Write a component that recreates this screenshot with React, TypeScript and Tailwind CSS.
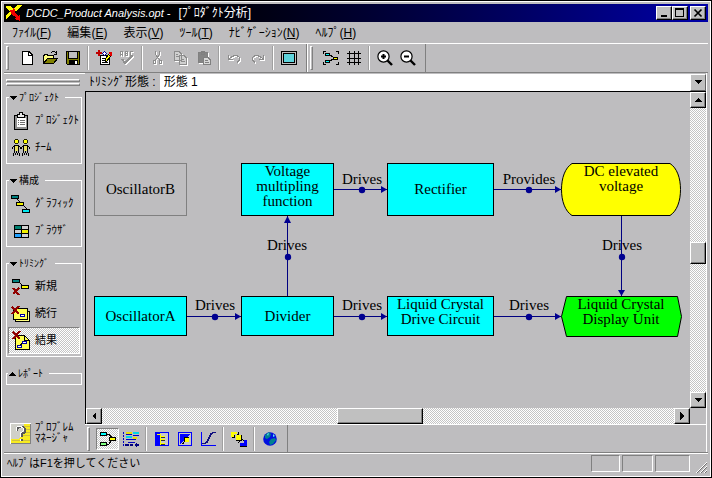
import type { ReactNode } from "react";

const raised =
  "border border-t-white border-l-white border-r-black border-b-black bg-[#c0c0c0] shadow-[inset_-1px_-1px_0_#808080]";
const checker =
  "bg-[repeating-conic-gradient(#ffffff_0_25%,#c4c4c4_0_50%)] bg-[length:2px_2px]";

function Icon({ w = 16, h = 16, smooth = false, children }: { w?: number; h?: number; smooth?: boolean; children: ReactNode }) {
  return (
    <svg
      aria-hidden="true"
      width={w}
      height={h}
      viewBox={`0 0 ${w} ${h}`}
      fill="none"
      stroke="#000"
      shapeRendering={smooth ? "auto" : "crispEdges"}
      className="shrink-0"
    >
      {children}
    </svg>
  );
}

/* ---------- toolbar pieces ---------- */

function Grip() {
  return <span className="mr-1.5 ml-0.5 h-6 w-[3px] shrink-0 border border-t-white border-r-[#808080] border-b-[#808080] border-l-white" />;
}

function Sep() {
  return <span className="mx-[3px] h-6 w-0.5 shrink-0 border-r border-l border-r-white border-l-[#a0a0a0]" />;
}

function Tool({ label, pressed = false, children }: { label: string; pressed?: boolean; children: ReactNode }) {
  return (
    <button
      type="button"
      aria-label={label}
      className={`flex h-[22px] w-[23px] shrink-0 items-center justify-center ${
        pressed ? `border border-t-[#808080] border-r-white border-b-white border-l-[#808080] ${checker}` : ""
      }`}
    >
      {children}
    </button>
  );
}

/* ---------- icons ---------- */

const NewIcon = () => (
  <Icon>
    <path d="M3.5 1.5H10L13.5 5V14.5H3.5Z" fill="#fff" />
    <path d="M9.5 1.5V5.5H13.5" />
  </Icon>
);

const OpenIcon = () => (
  <Icon>
    <path d="M1 13.5V5.5H2.5V4.5H5.5V5.5H11.5V8" fill="#ffff80" />
    <path d="M1.5 13.5L5.5 8.5H15.5L11.5 13.5Z" fill="#808000" />
    <path d="M9 2.5H10M10 1.5H13M13 2.5H14M14.5 1V5M12 4.5H15" />
  </Icon>
);

const SaveIcon = () => (
  <Icon>
    <path d="M1.5 1.5H14.5V14.5H2.5L1.5 13.5Z" fill="#808000" />
    <rect x="4" y="2" width="8" height="6" fill="#c0c0c0" stroke="none" />
    <path d="M3.5 1V8.5H12.5V1" />
    <rect x="4" y="10" width="9" height="5" fill="#000" stroke="none" />
    <rect x="10" y="11" width="2" height="3" fill="#fff" stroke="none" />
  </Icon>
);

const ReportIcon = () => (
  <Icon>
    <path d="M4.5 5.5H13.5V14.5H4.5Z" fill="#fff" />
    <path d="M6 8.5H9M6 10.5H9M6 12.5H12" />
    <path d="M0 3H6M3 0V6" stroke="#c00000" strokeWidth="2" />
    <path d="M6.5 3.5L8.5 1.5L10.5 3.5L8.5 5.5Z" fill="#fff" stroke="#0000a0" />
    <path d="M9 11.5H10.5L14.5 6.5L12.5 4.5L9 9Z" fill="#ffff00" />
    <path d="M13 2H16V6H14Z" fill="#e00000" stroke="none" />
  </Icon>
);

const SpellIcon = () => (
  <Icon>
    <g stroke="#fff" transform="translate(1 1)">
      <path d="M1.5 6V2L2.5 1.5L3.5 2V6M2 4.5H4M6.5 6V1.5H8.5V5.5H6.5M6 3.5H9M14 1.5H11.5V5.5H14" />
      <path d="M3 9L6 13L13 6" strokeWidth="2" />
    </g>
    <g stroke="#909090">
      <path d="M1.5 6V2L2.5 1.5L3.5 2V6M2 4.5H4M6.5 6V1.5H8.5V5.5H6.5M6 3.5H9M14 1.5H11.5V5.5H14" />
      <path d="M3 9L6 13L13 6" strokeWidth="2" />
    </g>
  </Icon>
);

function Embossed({ d, fill }: { d: string; fill?: string }) {
  return (
    <Icon>
      <path d={d} stroke="#fff" transform="translate(1 1)" />
      <path d={d} stroke="#8c8c8c" fill={fill} />
    </Icon>
  );
}

const CUT = "M5.5 1V4.5L9.5 10M9.5 1V4.5L5.5 10M3.5 10.5H5.5V13.5H3.5ZM9.5 10.5H11.5V13.5H9.5Z";
const COPY = "M1.5 1.5H6L8.5 4V10.5H1.5ZM3 4.5H5M3 6.5H7M6.5 5.5H11L13.5 8V14.5H6.5ZM8 9.5H11M8 11.5H12";
const PASTE = "M2.5 2.5H11.5V12.5H2.5ZM5.5 1.5H8.5V4.5H5.5Z";
const UNDO = "M1.5 5V9.5H6M2 9L5 6.5L8 5.5H10L12.5 7.5V10L10 12.5";
const REDO = "M13.5 5V9.5H9M13 9L10 6.5L7 5.5H5L2.5 7.5V10L5 12.5";

const PasteIcon = () => (
  <Icon>
    <path d={PASTE} stroke="#fff" transform="translate(1 1)" />
    <path d={PASTE} stroke="#808080" fill="#858585" />
    <path d="M7.5 7.5H12L14.5 10V14.5H7.5Z" fill="#d8d8d8" stroke="#808080" />
    <path d="M9 10.5H12M9 12.5H13" stroke="#808080" />
  </Icon>
);

const ScreenIcon = () => (
  <Icon>
    <rect x="0.5" y="1.5" width="15" height="13" fill="#c0c0c0" />
    <rect x="2.5" y="3.5" width="11" height="9" fill="#5fd4dc" />
  </Icon>
);

const ArrangeIcon = () => (
  <Icon>
    <path d="M0.5 4V1.5H3M13 1.5H15.5V4M15.5 12V14.5H13M3 14.5H0.5V12" />
    <path d="M6 4L11 8M6 12L11 8" />
    <rect x="2.5" y="3.5" width="4" height="2" fill="#00ffff" />
    <rect x="2.5" y="10.5" width="4" height="2" fill="#00ffff" />
    <rect x="10.5" y="7.5" width="4" height="2" fill="#ffff00" />
  </Icon>
);

const GridIcon = () => (
  <Icon>
    <path d="M3.5 1V15M8.5 1V15M12.5 1V15M1 3.5H15M1 8.5H15M1 12.5H15" />
  </Icon>
);

function ZoomIcon({ plus = false }: { plus?: boolean }) {
  return (
    <Icon smooth>
      <path d="M10 10L15 15" strokeWidth="2.4" />
      <circle cx="6.5" cy="6.5" r="5.6" fill="#fff" strokeWidth="1.2" />
      <path d="M4 6.5H9" strokeWidth="2" />
      {plus && <path d="M6.5 4V9" strokeWidth="2" />}
    </Icon>
  );
}

const ClipboardIcon = () => (
  <Icon w={18} h={18}>
    <rect x="2.5" y="3.5" width="13" height="14" fill="#909090" />
    <rect x="5" y="6" width="9" height="9" fill="#fff" stroke="none" />
    <path d="M5.5 5.5V2.5H7.5V0.5H10.5V2.5H12.5V5.5Z" fill="#e8e8e8" />
    <path d="M6 8.5H7M8 8.5H13M6 10.5H7M8 10.5H13M6 12.5H7M8 12.5H13" stroke="#707070" />
  </Icon>
);

const TeamIcon = () => (
  <Icon w={20} h={18}>
    {[0, 9].map((x) => (
      <g key={x} transform={`translate(${x} 0)`}>
        <path d="M4 0H7V1H8V4H7V5H4V4H3V1H4Z" fill="#202000" stroke="none" />
        <rect x="4" y="1" width="3" height="3" fill="#ffff00" stroke="none" />
        <path d="M3 6.5H8M2.5 7V8M8.5 7V8M1.5 8V10M9.5 8V10" />
        <path d="M3.5 7V11M7.5 7V11M3.5 11V14M7.5 11V14M5.5 12V14M2.5 14V17M4.5 14V16M6.5 14V16M8.5 14V17" />
        <rect x="4" y="7" width="3" height="5" fill="#e8e060" stroke="none" />
      </g>
    ))}
  </Icon>
);

const GraphicIcon = () => (
  <Icon w={20} h={18}>
    <path d="M6 4L16 14" />
    <rect x="0.5" y="0.5" width="7" height="3" fill="#008080" />
    <rect x="5.5" y="7.5" width="7" height="3" fill="#f0f000" />
    <rect x="11.5" y="14.5" width="7" height="3" fill="#00e8f0" />
  </Icon>
);

const BrowserIcon = () => (
  <Icon w={18} h={18}>
    <rect x="2.5" y="3.5" width="14" height="12" fill="#d0d0d0" />
    <rect x="3" y="4" width="6" height="3" fill="#008070" stroke="none" />
    <rect x="10" y="8" width="6" height="3" fill="#f0f000" stroke="none" />
    <rect x="3" y="12" width="6" height="3" fill="#20a0ff" stroke="none" />
    <path d="M9.5 3V16M2 7.5H17M2 11.5H17" />
  </Icon>
);

const TrimNewIcon = () => (
  <Icon w={20} h={18}>
    <path d="M8 4L11 7" />
    <rect x="1.5" y="1.5" width="7" height="3" fill="#008080" />
    <rect x="10.5" y="7.5" width="7" height="3" fill="#ffff00" />
    <path d="M2 10L8 17M8 10L2 16" stroke="#900000" strokeWidth="2" />
  </Icon>
);

const TrimContinueIcon = () => (
  <Icon w={20} h={18}>
    <path d="M4.5 6.5H18.5V16.5H4.5Z" fill="#ffff80" />
    <path d="M2.5 3.5H16.5V14.5H2.5Z" fill="#ffff50" />
    <rect x="9.5" y="9.5" width="4" height="2" fill="#fff" stroke="#0000a0" />
    <path d="M1 2L8 9M8 1L1 9" stroke="#900000" strokeWidth="2" />
  </Icon>
);

const TrimResultIcon = () => (
  <Icon w={20} h={20}>
    <path d="M4.5 4.5H13.5L18.5 9.5V18.5H4.5Z" fill="#ffff50" />
    <path d="M13.5 4.5V9.5H18.5" />
    <path d="M8 15L12 12" />
    <rect x="11.5" y="10.5" width="4" height="2" fill="#fff" stroke="#0000a0" />
    <rect x="6.5" y="14.5" width="4" height="2" fill="#fff" stroke="#0000a0" />
    <path d="M2 1L9 8M9 0L2 8" stroke="#900000" strokeWidth="2" />
  </Icon>
);

const QuestionIcon = () => (
  <Icon w={21} h={21}>
    <rect x="0.5" y="0.5" width="20" height="20" fill="#d0d0c8" stroke="#fff" />
    <path d="M14 1H20V20H1V16H9L15 9Z" fill="#f8ec20" stroke="none" />
    <path d="M14 3.5H20M15 6.5H20M15 9.5H20M12 12.5H20M2 17.5H20" stroke="#d0c040" />
    <path d="M1 20.5H20.5V1" stroke="#808080" />
    <path d="M7 8V6L9 4H13L15 6V9L12 11V14M12 16V18" stroke="#585858" strokeWidth="2" />
    <path d="M6 8V5L8 3.5H11L13 5V8L10.5 10V14M10.5 16V18" stroke="#fff" />
  </Icon>
);

const DiagramIcon = () => (
  <Icon>
    <path d="M7 3H9L12 7M7 13H9L12 9" />
    <rect x="0.5" y="1.5" width="6" height="3" fill="#00ffff" />
    <rect x="9.5" y="6.5" width="6" height="3" fill="#ffff00" />
    <rect x="0.5" y="11.5" width="6" height="3" fill="#80ff80" />
  </Icon>
);

const GanttIcon = () => (
  <Icon>
    <path d="M0.5 1V16" stroke="#0000c0" strokeDasharray="2 1" />
    <path d="M10 2H16M3 6H9" stroke="#00d8e8" strokeWidth="2" />
    <path d="M3 2H9M10 7H14" stroke="#e8e000" strokeWidth="2" />
    <path d="M3 3.5H9M10 4.5H16M3 8.5H13M5 11.5H12" stroke="#0000c0" />
    <path d="M2 14H6M7 14H10M12 14H16" stroke="#000080" strokeWidth="2" />
    <path d="M13.5 12V16" stroke="#000080" />
  </Icon>
);

const RulerIcon = () => (
  <Icon>
    <rect x="1" y="1" width="14" height="14" fill="#0000ff" stroke="none" />
    <rect x="6" y="2" width="8" height="12" fill="#c8c8c8" stroke="none" />
    <path d="M3 3.5H7M6.5 3V14M7 5.5H11M7 8.5H11M7 12.5H11" stroke="#ffff00" />
    <path d="M7 6.5H11M7 9.5H11M7 13.5H11" stroke="#303030" />
  </Icon>
);

const CornerIcon = () => (
  <Icon>
    <rect x="1.5" y="1.5" width="13" height="13" fill="#c8c8c8" stroke="#0000ff" />
    <path d="M3 3H13L11 6H7V10L3 13Z" fill="#0000ff" stroke="none" />
    <path d="M7.5 11V6.5H12" />
    <path d="M4 13L7 10V13Z" fill="#000" stroke="none" />
    <rect x="8" y="7" width="4" height="4" fill="#ffff00" stroke="none" />
  </Icon>
);

const CurveIcon = () => (
  <Icon>
    <path d="M1.5 1V14.5H16" stroke="#0000ff" />
    <path d="M2 12.5H5L7 11L9 7L11 3L13 1.5H16" stroke="#101080" strokeWidth="1.5" />
  </Icon>
);

const StepsIcon = () => (
  <Icon>
    <path d="M0 1H6V3H3V6H0Z" fill="#ffff00" stroke="none" />
    <path d="M7.5 1V3M1 6.5H4M3.5 4V6" />
    <rect x="5" y="4" width="5" height="5" fill="#ffff00" stroke="none" />
    <path d="M5 9.5H10.5V4M6 3.5H8M11 8L13 10" />
    <path d="M13 9H16V15H9V12H13Z" fill="#0000ff" stroke="none" />
    <path d="M9 15.5H16M7 12L9 10" />
  </Icon>
);

const GlobeIcon = () => (
  <Icon smooth>
    <circle cx="8" cy="8" r="6.8" fill="#0010e0" stroke="none" />
    <path d="M3 4L7 1L9 3L8 6L5 8L3 7ZM9 8L13 7L14 9L11 13L8 14L7 11Z" fill="#008090" stroke="none" />
    <path d="M5 3L7 2L6 5ZM11 3L13 5L11 6Z" fill="#60e8f0" stroke="none" />
  </Icon>
);

/* ---------- sidebar ---------- */

function Group({ title, open = true, children }: { title: string; open?: boolean; children?: ReactNode }) {
  return (
    <fieldset className={`min-w-0 border border-white ${open ? "px-px pt-[3px] pb-0.5" : "pt-1"}`}>
      <legend className="ml-px pr-1.5">
        <button type="button" aria-expanded={open} className="flex h-[13px] items-center gap-0.5 pl-px text-[10px] leading-[13px]">
          <svg aria-hidden="true" width="7" height="4" viewBox="0 0 7 4" shapeRendering="crispEdges">
            <path d={open ? "M0 0H7L3.5 4Z" : "M0 4H7L3.5 0Z"} />
          </svg>
          {title}
        </button>
      </legend>
      {children}
    </fieldset>
  );
}

function SideItem({ label, icon, pressed = false }: { label: string; icon: ReactNode; pressed?: boolean }) {
  return (
    <button
      type="button"
      aria-pressed={pressed}
      className={`flex h-[27px] w-full items-center gap-1 border pl-0.5 text-[11px] leading-none whitespace-nowrap ${
        pressed ? `border-t-[#808080] border-r-white border-b-white border-l-[#808080] ${checker}` : "border-transparent"
      }`}
    >
      <span className="flex w-5 shrink-0 justify-center">{icon}</span>
      {label}
    </button>
  );
}

function Sidebar() {
  return (
    <aside className="flex w-[81px] shrink-0 flex-col border-t border-white pr-[3px] pl-0.5">
      <div className="mt-[5px] flex flex-col gap-px pr-0.5">
        <span className="h-[3px] border border-t-white border-r-[#808080] border-b-[#808080] border-l-white" />
        <span className="h-[3px] border border-t-white border-r-[#808080] border-b-[#808080] border-l-white" />
      </div>
      <div className="mt-[5px] flex flex-col gap-2.5">
        <Group title="ﾌﾟﾛｼﾞｪｸﾄ">
          <SideItem label="ﾌﾟﾛｼﾞｪｸﾄ" icon={<ClipboardIcon />} />
          <SideItem label="ﾁｰﾑ" icon={<TeamIcon />} />
        </Group>
        <Group title="構成">
          <SideItem label="ｸﾞﾗﾌｨｯｸ" icon={<GraphicIcon />} />
          <SideItem label="ﾌﾞﾗｳｻﾞ" icon={<BrowserIcon />} />
        </Group>
        <Group title="ﾄﾘﾐﾝｸﾞ">
          <SideItem label="新規" icon={<TrimNewIcon />} />
          <SideItem label="続行" icon={<TrimContinueIcon />} />
          <SideItem label="結果" icon={<TrimResultIcon />} pressed />
        </Group>
        <Group title="ﾚﾎﾟｰﾄ" open={false} />
      </div>
      <button type="button" className="mt-auto mb-2 ml-1 flex items-center gap-1 text-left text-[11px] leading-[11px] whitespace-nowrap">
        <QuestionIcon />
        <span>
          ﾌﾟﾛﾌﾞﾚﾑ
          <br />
          ﾏﾈｰｼﾞｬ
        </span>
      </button>
    </aside>
  );
}

/* ---------- diagram ---------- */

function Node({ place, children }: { place: string; children: ReactNode }) {
  return <div className={`absolute flex justify-center text-center ${place}`}>{children}</div>;
}

function EdgeLabel({ place, children }: { place: string; children: ReactNode }) {
  return <span className={`absolute -translate-x-1/2 ${place}`}>{children}</span>;
}

const dots = [
  [276, 98], [443, 98], [129, 225], [276, 225], [443, 225], [202, 165], [536, 165],
];
const rightArrows = [
  [301, 97], [475, 97], [155, 224], [301, 224], [475, 224],
];

function Diagram() {
  return (
    <div className="relative min-h-0 min-w-0 overflow-hidden font-['Liberation_Serif',serif] text-[15px] leading-[15px]">
      <svg aria-hidden="true" width="604" height="314" viewBox="0 0 604 314" className="absolute top-0 left-0">
        <g stroke="#000080" strokeWidth="1" shapeRendering="crispEdges">
          <path d="M248 97.5H301M408 97.5H475M101 224.5H155M248 224.5H301M408 224.5H475M201.5 204V124M535.5 124V204" />
        </g>
        <g fill="#000090">
          {rightArrows.map(([x, y]) => (
            <path key={`${x}-${y}`} d={`M${x} ${y + 0.5}L${x - 6} ${y - 3}V${y + 4}Z`} />
          ))}
          <path d="M201.5 124L198 131H205Z" />
          <path d="M535.5 204L532 198H539Z" />
          {dots.map(([x, y]) => (
            <circle key={`${x}-${y}`} cx={x} cy={y} r="3.2" />
          ))}
        </g>
        <g stroke="#000" strokeWidth="1">
          <path d="M486 71.5H584C591 76 594.5 86 594.5 97.5S591 119 584 123.5H486C479 119 475.5 109 475.5 97.5S479 76 486 71.5Z" fill="#ffff00" />
          <path d="M480.5 204.5H591.5L595.5 224.5L591.5 244.5H480.5L475.5 224.5Z" fill="#00ff00" />
        </g>
      </svg>

      <Node place="left-2 top-[71px] h-[53px] w-[93px] items-center border border-[#808080]">OscillatorB</Node>
      <Node place="left-[155px] top-[71px] h-[53px] w-[93px] border border-black bg-[#00ffff]">
        Voltage<br />multipling<br />function
      </Node>
      <Node place="left-[301px] top-[71px] h-[53px] w-[107px] items-center border border-black bg-[#00ffff]">Rectifier</Node>
      <Node place="left-[475px] top-[72px] h-[52px] w-[120px]">
        DC elevated<br />voltage
      </Node>
      <Node place="left-2 top-[204px] h-10 w-[93px] items-center border border-black bg-[#00ffff]">OscillatorA</Node>
      <Node place="left-[155px] top-[204px] h-10 w-[93px] items-center border border-black bg-[#00ffff]">Divider</Node>
      <Node place="left-[301px] top-[204px] h-10 w-[107px] border border-black bg-[#00ffff]">
        Liquid Crystal<br />Drive Circuit
      </Node>
      <Node place="left-[475px] top-[205px] h-10 w-[120px]">
        Liquid Crystal<br />Display Unit
      </Node>

      <EdgeLabel place="left-[276px] top-[80px]">Drives</EdgeLabel>
      <EdgeLabel place="left-[443px] top-[80px]">Provides</EdgeLabel>
      <EdgeLabel place="left-[201px] top-[146px]">Drives</EdgeLabel>
      <EdgeLabel place="left-[536px] top-[146px]">Drives</EdgeLabel>
      <EdgeLabel place="left-[129px] top-[206px]">Drives</EdgeLabel>
      <EdgeLabel place="left-[276px] top-[206px]">Drives</EdgeLabel>
      <EdgeLabel place="left-[443px] top-[206px]">Drives</EdgeLabel>
    </div>
  );
}

/* ---------- scroll bars ---------- */

function ScrollButton({ label, d }: { label: string; d: string }) {
  return (
    <button type="button" aria-label={label} className={`flex size-4 shrink-0 items-center justify-center ${raised}`}>
      <svg aria-hidden="true" width="8" height="8" viewBox="0 0 8 8" shapeRendering="crispEdges">
        <path d={d} />
      </svg>
    </button>
  );
}

function Workspace() {
  return (
    <div className="grid min-h-0 flex-1 grid-cols-[1fr_16px] grid-rows-[1fr_16px] border-t border-l border-black">
      <Diagram />
      <div className={`flex flex-col ${checker}`}>
        <ScrollButton label="上へ" d="M0 6H8L4 2Z" />
        <span className="grow-[133]" />
        <span className={`h-[22px] ${raised}`} />
        <span className="grow-[128]" />
        <ScrollButton label="下へ" d="M0 2H8L4 6Z" />
      </div>
      <div className={`flex ${checker}`}>
        <ScrollButton label="左へ" d="M6 0V8L2 4Z" />
        <span className="grow-[235]" />
        <span className={`w-[86px] ${raised}`} />
        <span className="grow-[251]" />
        <ScrollButton label="右へ" d="M2 0V8L6 4Z" />
      </div>
      <span />
    </div>
  );
}

/* ---------- bars ---------- */

const menus = [
  ["ﾌｧｲﾙ", "F"],
  ["編集", "E"],
  ["表示", "V"],
  ["ﾂｰﾙ", "T"],
  ["ﾅﾋﾞｹﾞｰｼｮﾝ", "N"],
  ["ﾍﾙﾌﾟ", "H"],
];

function TitleBar() {
  const btn = `flex h-3.5 w-4 items-center justify-center ${raised}`;
  return (
    <header className="flex h-[18px] shrink-0 items-center bg-linear-to-r from-black from-15% to-[#0000a8] pr-0.5 pl-0.5 text-white">
      <Icon w={16} h={16}>
        <path d="M0 1H5L7 4L11 0H16L10 6L4 10L0 14V10L4 7L1 4Z" fill="#ffff00" stroke="none" />
        <path d="M4 5H7V3L9 4V8L12 11L14 9V16L8 14L10 12L5 9Z" fill="#f00000" stroke="none" />
      </Icon>
      <h1 className="ml-1 flex gap-2 text-[12px] leading-[18px] font-normal whitespace-nowrap">
        <span className="text-[11px] italic">DCDC_Product Analysis.opt -</span>
        <span>[ﾌﾟﾛﾀﾞｸﾄ分析]</span>
      </h1>
      <div className="ml-auto flex">
        <button type="button" aria-label="最小化" className={btn}>
          <Icon w={10} h={10}><path d="M2 8H8" strokeWidth="2" /></Icon>
        </button>
        <button type="button" aria-label="最大化" className={btn}>
          <Icon w={10} h={10}><path d="M0.5 0.5H8.5V8.5H0.5ZM0 1.5H9" /></Icon>
        </button>
        <button type="button" aria-label="閉じる" className={`ml-0.5 ${btn}`}>
          <Icon w={10} h={10} smooth><path d="M1.5 1.5L8.5 8.5M8.5 1.5L1.5 8.5" strokeWidth="1.7" /></Icon>
        </button>
      </div>
    </header>
  );
}

function MainToolbar() {
  return (
    <div className="flex h-[29px] shrink-0 items-center border-b border-[#808080]">
      <Grip />
      <Tool label="新規作成"><NewIcon /></Tool>
      <Tool label="開く"><OpenIcon /></Tool>
      <Tool label="保存"><SaveIcon /></Tool>
      <Sep />
      <Tool label="レポート作成"><ReportIcon /></Tool>
      <Tool label="スペルチェック"><SpellIcon /></Tool>
      <Sep />
      <Tool label="切り取り"><Embossed d={CUT} /></Tool>
      <Tool label="コピー"><Embossed d={COPY} fill="#d0d0d0" /></Tool>
      <Tool label="貼り付け"><PasteIcon /></Tool>
      <Sep />
      <Tool label="元に戻す"><Embossed d={UNDO} /></Tool>
      <Tool label="やり直し"><Embossed d={REDO} /></Tool>
      <Sep />
      <Tool label="全画面"><ScreenIcon /></Tool>
      <span className="ml-1.5 h-full w-0.5 border-r border-l border-r-white border-l-[#808080]" />
      <Grip />
      <Tool label="整列"><ArrangeIcon /></Tool>
      <Tool label="グリッド"><GridIcon /></Tool>
      <Sep />
      <Tool label="拡大"><ZoomIcon plus /></Tool>
      <Tool label="縮小"><ZoomIcon /></Tool>
      <span className="ml-1.5 h-full w-px bg-[#808080]" />
    </div>
  );
}

function ViewToolbar() {
  return (
    <div className="flex h-[28px] shrink-0 items-center border-t border-white">
      <Grip />
      <Tool label="ダイアグラム" pressed><DiagramIcon /></Tool>
      <Tool label="工程表"><GanttIcon /></Tool>
      <Sep />
      <Tool label="尺度"><RulerIcon /></Tool>
      <Tool label="領域"><CornerIcon /></Tool>
      <Tool label="曲線"><CurveIcon /></Tool>
      <Sep />
      <Tool label="手順"><StepsIcon /></Tool>
      <Sep />
      <Tool label="ウェブ"><GlobeIcon /></Tool>
      <span className="ml-1.5 h-full w-px bg-[#808080]" />
    </div>
  );
}

function StatusBar() {
  const cell = "h-[17px] border border-t-[#808080] border-r-white border-b-white border-l-[#808080]";
  return (
    <footer className="flex h-[22px] shrink-0 items-center gap-0.5 border-t border-t-[#808080] pl-[3px] text-[11px] shadow-[inset_0_1px_0_#ffffff]">
      <p className="mr-auto">ﾍﾙﾌﾟはF1を押してください</p>
      <span className={`w-[29px] ${cell}`} />
      <span className={`w-[31px] ${cell}`} />
      <span className={`w-[35px] ${cell}`} />
      <svg aria-hidden="true" width="14" height="14" viewBox="0 0 14 14" className="ml-0.5 self-end">
        <path d="M2 13L13 2M6 13L13 6M10 13L13 10" stroke="#fff" />
        <path d="M3 13L13 3M7 13L13 7M11 13L13 11" stroke="#707070" />
      </svg>
    </footer>
  );
}

export default function App() {
  return (
    <div className="flex h-screen min-h-[420px] flex-col border border-black bg-[#bebdbf] font-['Liberation_Sans','Noto_Sans_CJK_JP',sans-serif] text-[12px] text-black">
      <div className="flex min-h-0 flex-1 flex-col border border-white p-0.5">
        <TitleBar />
        <nav className="flex h-[22px] shrink-0 items-center gap-4 border-b border-white pl-2">
          {menus.map(([name, key]) => (
            <button key={key} type="button" className="whitespace-nowrap">
              {name}(<u>{key}</u>)
            </button>
          ))}
        </nav>
        <MainToolbar />
        <div className="flex min-h-0 flex-1">
          <Sidebar />
          <main className="mr-px flex min-w-0 flex-1 flex-col border-r border-white">
            <div className="flex h-[18px] shrink-0 items-center gap-1 pl-1">
              <label htmlFor="trim-form" className="whitespace-nowrap">ﾄﾘﾐﾝｸﾞ形態 :</label>
              <div className="relative h-[17px] flex-1">
                <select id="trim-form" defaultValue="1" className="block h-full w-full appearance-none bg-white pl-1 leading-[17px]">
                  <option value="1">形態 1</option>
                </select>
                <span className="pointer-events-none absolute top-0 right-0 flex h-full w-4 items-center justify-center border border-t-white border-r-[#606060] border-b-[#606060] border-l-white bg-[#c0c0c0]">
                  <svg aria-hidden="true" width="8" height="4" viewBox="0 0 8 4" shapeRendering="crispEdges">
                    <path d="M0 0H8L4 4Z" />
                  </svg>
                </span>
              </div>
            </div>
            <Workspace />
            <ViewToolbar />
          </main>
        </div>
        <StatusBar />
      </div>
    </div>
  );
}
